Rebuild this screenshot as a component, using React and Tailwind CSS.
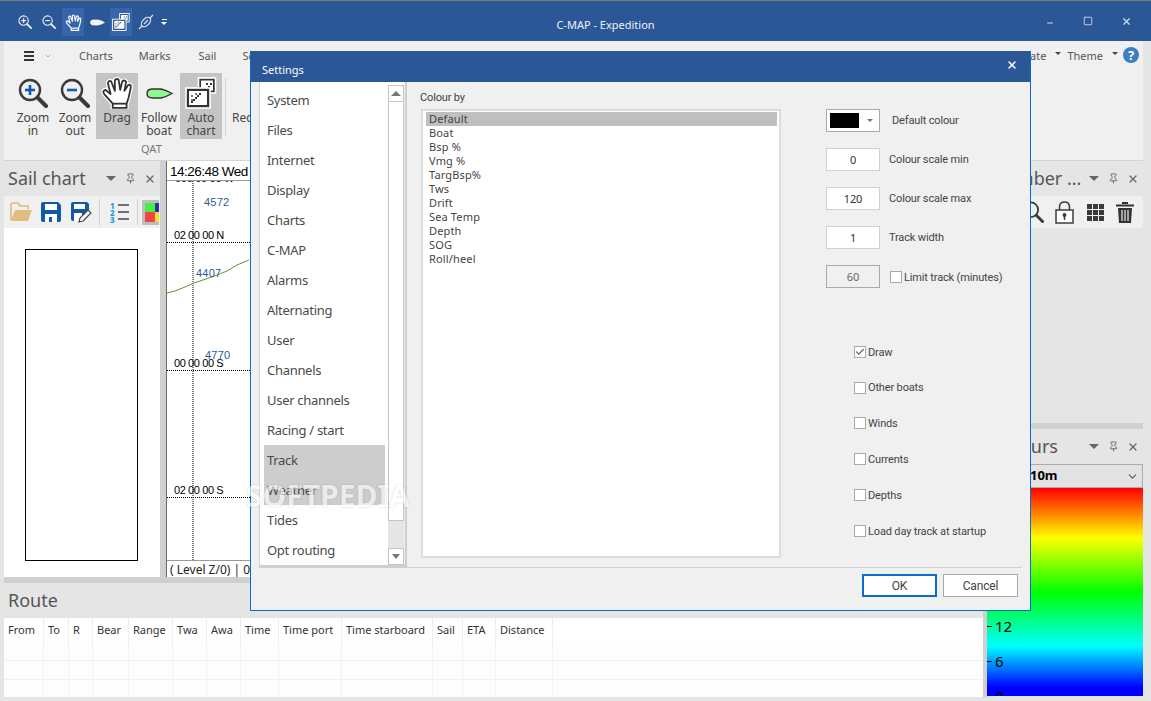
import React from 'react';
import { Minus, Square, X, Check, ChevronDown, Pin } from 'lucide-react';

const Magnifier = ({ mark, size = 30, ring = '#3a3a3a', markColor = '#0b5cad', glass = 'none' }) => (
    <svg width={size} height={size} viewBox="0 0 30 30" fill="none">
        <circle cx="12" cy="12" r="10" fill={glass} stroke={ring} strokeWidth="2.4" />
        <path d="M19.5 19.5 L28 28" stroke={ring} strokeWidth="4" strokeLinecap="round" />
        <path d="M7 12 H17" stroke={markColor} strokeWidth="2.6" />
        {mark === 'plus' && <path d="M12 7 V17" stroke={markColor} strokeWidth="2.6" />}
    </svg>
);

const handPath = 'M11 29 V25 L3 16 Q1 13 4 12 L9 16 L6.5 6 Q7 3 9.5 4 L13 13 L13 3 Q14.5 1 16.5 2.5 L18 12 L20 4 Q22 2.5 23.5 4.5 L22 13 L25.5 7.5 Q28 6.5 28 9.5 L26 19 L24 25 V29Z';

const HandIcon = ({ size = 32, line = '#333', fill = '#fff', halo, width = 1.7 }) => (
    <svg width={size} height={size} viewBox="0 0 30 30" strokeLinejoin="round">
        {halo && <path d={handPath} fill="none" stroke={halo} strokeWidth="4" />}
        <path d={handPath} fill={fill} stroke={line} strokeWidth={width} />
        <path d="M11 25 H24" stroke={line} strokeWidth={width} />
    </svg>
);

const Boat = ({ w = 27, h = 11, fill = '#8dfa8d', stroke = '#333' }) => (
    <svg width={w} height={h} viewBox="0 0 27 11">
        <path d="M1 5.5 C1 2 3 1 7 1 L15 1 Q21 2.5 26 5.5 Q21 8.5 15 10 L7 10 C3 10 1 9 1 5.5Z" fill={fill} stroke={stroke} strokeWidth="1.4" />
    </svg>
);

const AutoChart = ({ size = 32, line = '#333' }) => (
    <svg width={size} height={size} viewBox="0 0 32 32">
        <rect x="13.5" y="1" width="17" height="15" fill={line} stroke="#fff" strokeWidth="1.6" />
        <rect x="16" y="3.5" width="12" height="10" fill="#fff" />
        <path d="M21 6h2v2h-2zM25 6h2v2h-2zM23 9h2v2h-2z" fill={line} />
        <rect x="1" y="11" width="24" height="20" fill={line} stroke="#fff" strokeWidth="1.6" />
        <rect x="4" y="14" width="18" height="14" fill="#fff" />
        <path d="M6 26h2v-2h2v-2h2v-2h2v-2h2v-2h-2v2h-2v2h-2v2H8v2H6z" fill={line} />
        <path d="M6 22h2v2H6zM6 18h2v2H6zM10 16h2v2h-2z" fill="#777" />
    </svg>
);

const Folder = () => (
    <svg width="23" height="20" viewBox="0 0 23 20">
        <path d="M1 18 V3 Q1 1 3 1 H8 L10 4 H18 V7" fill="none" stroke="#e0b97a" strokeWidth="1.6" />
        <path d="M1 19 L5 8 H22 L18 19Z" fill="#e3bd80" />
    </svg>
);

const Save = () => (
    <svg width="22" height="22" viewBox="0 0 22 22">
        <path d="M1 3 Q1 1 3 1 H18 L21 4 V19 Q21 21 19 21 H3 Q1 21 1 19Z" fill="#0f5ba7" />
        <rect x="5" y="3" width="12" height="6" fill="#fff" />
        <rect x="5" y="13" width="12" height="8" fill="#fff" />
        <rect x="9" y="16" width="3" height="5" fill="#0f5ba7" />
    </svg>
);

const SaveEdit = () => (
    <svg width="22" height="22" viewBox="0 0 22 22">
        <path d="M1 3 Q1 1 3 1 H17 L19 3 V12 L11 20 H3 Q1 20 1 18Z" fill="#0f5ba7" />
        <rect x="4" y="3" width="11" height="5" fill="#fff" />
        <rect x="4" y="12" width="8" height="8" fill="#fff" />
        <path d="M9 21 L10 17 L18 9 L21 12 L13 20Z" fill="#fff" stroke="#444" strokeWidth="1.2" />
    </svg>
);

const NumberedList = () => (
    <svg width="20" height="21" viewBox="0 0 20 21">
        <path d="M8 3h11M8 10h11M8 17h11" stroke="#444" strokeWidth="1.6" />
        <text x="0" y="6.5" fontSize="8" fontWeight="800" fill="#1e9be0">1</text>
        <text x="0" y="13.5" fontSize="8" fontWeight="800" fill="#1e9be0">2</text>
        <text x="0" y="20.5" fontSize="8" fontWeight="800" fill="#1e9be0">3</text>
    </svg>
);

const ColourBlock = () => (
    <div className="w-[17px] h-[25px] border-[3px] border-r-0 border-[#bdbdbd] grid grid-cols-[10px_4px] grid-rows-2">
        <div className="bg-[#44f044]" />
        <div className="bg-[#2a2ab8]" />
        <div className="bg-[#f24444]" />
        <div className="bg-[#f0e030]" />
    </div>
);

const Lock = () => (
    <svg width="19" height="23" viewBox="0 0 19 23" fill="none" stroke="#3c3c3c" strokeWidth="1.5">
        <path d="M4.5 9 V6 Q4.5 1 9.5 1 Q14.5 1 14.5 6 V9" />
        <rect x="1" y="9" width="17" height="13" fill="#fff" />
        <circle cx="9.5" cy="14" r="1.2" fill="#3c3c3c" />
        <path d="M9.5 14 V19" />
    </svg>
);

const GridIcon = () => (
    <div className="grid grid-cols-3 gap-[1px] w-[17px] h-[17px]">
        {Array.from({ length: 9 }).map((_, i) => (
            <div key={i} className="bg-[#3a3a3a]" />
        ))}
    </div>
);

const Trash = () => (
    <svg width="20" height="23" viewBox="0 0 20 23">
        <path d="M7 2 H13 M1 4.5 H19" stroke="#333" strokeWidth="2.2" />
        <path d="M3 7 H17 L16 22 H4Z" fill="#333" />
        <path d="M7 9 V20 M10 9 V20 M13 9 V20" stroke="#fff" strokeWidth="1.1" />
    </svg>
);

const RouteIcon = () => (
    <svg width="16" height="16" viewBox="0 0 16 16" fill="none" stroke="#d8e2f0" strokeWidth="1.3">
        <ellipse cx="8" cy="8" rx="3.4" ry="5.6" transform="rotate(45 8 8)" />
        <path d="M1 15 L4 12 M12 4 L15 1" />
        <path d="M6 10 L10 6" />
    </svg>
);

const PanelHead = ({ title, titleClass = 'pl-[4px]' }) => (
    <div className="flex items-center h-[35px] shrink-0">
        <span className={`flex-1 text-[18px] text-[#555] whitespace-nowrap ${titleClass}`}>{title}</span>
        <div className="w-0 h-0 border-x-[5px] border-x-transparent border-t-[5px] border-t-[#666] mr-[9px]" />
        <Pin size={11} color="#666" className="mr-[8px]" />
        <X size={12} color="#666" strokeWidth={2.4} className="mr-[4px]" />
    </div>
);

const RibbonBtn = ({ icon, top, bottom, active }) => (
    <div className={`w-[42px] h-[66px] flex flex-col items-center ${active ? 'bg-[#c4c4c4]' : ''}`}>
        <div className="h-[38px] flex items-center justify-center pt-[2px]">{icon}</div>
        <div className="text-[12px] leading-[13px] text-[#444] text-center">
            <div>{top}</div>
            {bottom && <div>{bottom}</div>}
        </div>
    </div>
);

const sideItems = ['System', 'Files', 'Internet', 'Display', 'Charts', 'C-MAP', 'Alarms', 'Alternating', 'User', 'Channels', 'User channels', 'Racing / start', 'Track', 'Weather', 'Tides', 'Opt routing'];
const colourItems = ['Default', 'Boat', 'Bsp %', 'Vmg %', 'TargBsp%', 'Tws', 'Drift', 'Sea Temp', 'Depth', 'SOG', 'Roll/heel'];
const checks = [
    { label: 'Draw', on: true },
    { label: 'Other boats' },
    { label: 'Winds' },
    { label: 'Currents' },
    { label: 'Depths' },
    { label: 'Load day track at startup' },
];
const columns = ['From', 'To', 'R', 'Bear', 'Range', 'Twa', 'Awa', 'Time', 'Time port', 'Time starboard', 'Sail', 'ETA', 'Distance', ''];
const gridCols = 'grid grid-cols-[40px_25px_24px_36px_44px_34px_34px_38px_63px_91px_30px_33px_57px_1fr]';

const Checkbox = ({ on }) => (
    <div className="w-[12px] h-[12px] border border-[#a9a9a9] bg-white flex items-center justify-center shrink-0">
        {on && <Check size={10} strokeWidth={3} color="#666" />}
    </div>
);

const NumberField = ({ value, label }) => (
    <div className="flex items-center h-[23px] mb-[16px]">
        <div className="w-[54px] h-[23px] border border-[#d0d0d0] bg-white text-center text-[11px] leading-[21px] text-[#333] font-['Noto_Sans',sans-serif]">{value}</div>
        <span className="ml-[9px] pt-[2px]">{label}</span>
    </div>
);

const SettingsDialog = () => (
    <div className="absolute left-[250px] top-[51px] w-[781px] h-[560px] border border-[#0a6ad0] border-t-0 bg-[#f0f0f0] flex flex-col text-[11px] text-[#444] tracking-[-0.15px] font-['Roboto',sans-serif]">
        <div className="h-[31px] shrink-0 bg-[#2b5797] text-white flex items-center justify-between pl-[11px] pr-[12px] pt-[8px] text-[11px] tracking-normal font-['Noto_Sans',sans-serif]">
            <span>Settings</span>
            <X size={12} strokeWidth={3} className="-mt-[12px]" />
        </div>
        <div className="flex h-[485px] shrink-0 pl-[8px] pr-[8px]">
            <div className="w-[148px] h-[485px] flex border-r-2 border-b-2 border-l border-[#cfcfcf] pr-[1px]">
                <div className="w-[129px] bg-white pt-[3px] pl-[4px] relative">
                    {sideItems.map((item, i) => (
                        <div key={item} className={`h-[30px] w-[121px] pl-[3px] pt-[2px] flex items-center text-[13px] text-[#4a4a4a] tracking-[-0.3px] font-['Noto_Sans',sans-serif] ${i === 12 || i === 13 ? 'bg-[#cdcdcd]' : ''}`}>
                            {item}
                        </div>
                    ))}
                    <span className="absolute z-10 left-[-14px] top-[391px] text-[30px] font-bold tracking-normal text-white opacity-60 whitespace-nowrap font-['Noto_Sans',sans-serif] [text-shadow:0_0_2px_rgba(0,0,0,0.3)]">SOFTPEDIA</span>
                </div>
                <div className="w-[16px] bg-white flex flex-col pt-[3px]">
                    <div className="h-[17px] border border-[#c4c4c4] bg-white flex items-center justify-center">
                        <div className="w-0 h-0 border-x-[5px] border-x-transparent border-b-[5px] border-b-[#777]" />
                    </div>
                    <div className="h-[419px] border-x border-b border-[#c4c4c4] bg-white" />
                    <div className="h-[27px] bg-[#e5e5e5]" />
                    <div className="h-[17px] border border-[#c4c4c4] bg-white flex items-center justify-center">
                        <div className="w-0 h-0 border-x-[4px] border-x-transparent border-t-[5px] border-t-[#777]" />
                    </div>
                </div>
            </div>
            <div className="w-[374px] pl-[13px] pt-[9px] shrink-0">
                <div className="h-[18px] leading-[14px]">Colour by</div>
                <div className="w-[360px] h-[449px] ml-[1px] border-2 border-[#dcdcdc] bg-white pl-[3px] pr-[2px] pt-px">
                    {colourItems.map((item, i) => (
                        <div key={item} className={`h-[14px] pl-[3px] leading-[14px] text-[11px] text-[#444] tracking-[0.15px] font-['Noto_Sans',sans-serif] ${i === 0 ? 'bg-[#bfbfbf]' : ''}`}>{item}</div>
                    ))}
                </div>
            </div>
            <div className="flex-1 pt-[27px] pl-[45px]">
                <div className="flex items-center h-[23px] mb-[16px]">
                    <div className="w-[54px] h-[23px] border border-[#a9a9a9] bg-white flex items-center pl-[3px]">
                        <div className="w-[29px] h-[15px] bg-black" />
                        <div className="ml-[8px] w-0 h-0 border-x-[3px] border-x-transparent border-t-[3px] border-t-[#777]" />
                    </div>
                    <span className="ml-[12px] pt-[2px]">Default colour</span>
                </div>
                <NumberField value="0" label="Colour scale min" />
                <NumberField value="120" label="Colour scale max" />
                <NumberField value="1" label="Track width" />
                <div className="flex items-center h-[23px]">
                    <div className="w-[54px] h-[23px] border border-[#a9a9a9] text-center text-[11px] leading-[21px] text-[#666] font-['Noto_Sans',sans-serif]">60</div>
                    <div className="ml-[10px]"><Checkbox /></div>
                    <span className="ml-[2px] pt-[3px]">Limit track (minutes)</span>
                </div>
                <div className="mt-[46px] ml-[28px]">
                    {checks.map((c) => (
                        <div key={c.label} className="h-[35.8px] flex items-center gap-[2px]">
                            <Checkbox on={c.on} />
                            <span className="pt-[2px]">{c.label}</span>
                        </div>
                    ))}
                </div>
            </div>
        </div>
        <div className="mx-[8px] border-t border-[#cfcfcf]" />
        <div className="flex justify-end gap-[6px] pr-[12px] pt-[6px]">
            <button className="w-[75px] h-[23px] border-2 border-[#0a6ad0] bg-white text-[12px] text-[#444]">OK</button>
            <button className="w-[75px] h-[23px] border border-[#a9a9a9] bg-white text-[12px] text-[#444]">Cancel</button>
        </div>
    </div>
);

const ChartCanvas = () => (
    <div className="flex-1 relative bg-white overflow-hidden text-black font-['Liberation_Sans',sans-serif] text-[11px] leading-[13px]">
        <svg className="absolute inset-0 w-full h-full">
            <path d="M26 0 V380" stroke="#000" strokeDasharray="1 1" />
            <path d="M0 61.5 H820 M0 189.5 H820 M0 316.5 H820" stroke="#000" strokeDasharray="1 1" />
            <path d="M0 112 L8 110 L18 106 L27 102 L45 96 L60 90 L70 84 L82 79" fill="none" stroke="#5e9438" strokeWidth="1" />
        </svg>
        <span className="absolute left-[8px] top-[-9px] tracking-[-0.3px] whitespace-nowrap">000 00 00 W</span>
        <span className="absolute left-[37px] top-[15px] tracking-[0.2px] text-[#2b5c90]">4572</span>
        <span className="absolute left-[7px] top-[48px] tracking-[-0.4px] whitespace-nowrap">02 00 00 N</span>
        <span className="absolute left-[29px] top-[86px] tracking-[0.2px] text-[#2b5c90]">4407</span>
        <span className="absolute left-[38px] top-[168px] tracking-[0.2px] text-[#2b5c90]">4770</span>
        <span className="absolute left-[7px] top-[176px] tracking-[-0.4px] whitespace-nowrap">00 00 00 S</span>
        <span className="absolute left-[7px] top-[303px] tracking-[-0.4px] whitespace-nowrap">02 00 00 S</span>
    </div>
);

export default function App() {
    return (
        <div className="relative w-[1151px] h-[701px] overflow-hidden bg-[#e5e5e5] font-['Noto_Sans',sans-serif]">
            {/* title bar */}
            <div className="h-[41px] bg-[#2b5797] border-t border-[#7a7a7a] flex text-white">
                <div className="w-[180px] flex items-center pl-[14px] pt-[2px]">
                    <div className="w-[22px] flex justify-center"><Magnifier mark="plus" size={14} ring="#e8eef6" markColor="#e8eef6" /></div>
                    <div className="w-[26px] flex justify-center"><Magnifier size={14} ring="#e8eef6" markColor="#e8eef6" /></div>
                    <div className="w-[22px] h-[28px] bg-[#3566ab] flex items-center justify-center"><HandIcon size={17} line="#fff" fill="none" width={2} /></div>
                    <div className="w-[26px] flex justify-center"><Boat w={15} h={7} fill="#f4f6fa" stroke="#f4f6fa" /></div>
                    <div className="w-[22px] h-[28px] bg-[#3566ab] flex items-center justify-center"><AutoChart size={18} line="#2b5797" /></div>
                    <div className="w-[28px] flex justify-center"><RouteIcon /></div>
                    <div className="w-[8px] flex flex-col items-center gap-[2px]">
                        <div className="w-[5px] h-[1px] bg-white" />
                        <div className="w-0 h-0 border-x-[3px] border-x-transparent border-t-[3px] border-t-white" />
                    </div>
                </div>
                <div className="flex-1 flex items-center justify-center text-[11px] pt-[8px] text-[#eef2f8]">C-MAP - Expedition</div>
                <div className="w-[120px] pr-[6px] flex items-center text-[#d5deec]">
                    <div className="w-[38px] flex justify-center pt-[3px]"><Minus size={8} strokeWidth={3} /></div>
                    <div className="w-[38px] flex justify-center"><Square size={10} strokeWidth={2} /></div>
                    <div className="w-[38px] flex justify-center"><X size={11} strokeWidth={2.5} /></div>
                </div>
            </div>

            <div className="pl-[4px] pr-[8px]">
                {/* ribbon */}
                <div className="h-[120px] bg-[#f0f0f0] border-b border-[#d4d4d4] relative">
                    <div className="h-[32px] flex items-center text-[11px] text-[#555] pb-[2px]">
                        <div className="w-[20px] ml-[20px] flex flex-col gap-[2px]">
                            <div className="w-[10px] h-[2px] bg-[#333]" />
                            <div className="w-[10px] h-[2px] bg-[#333]" />
                            <div className="w-[10px] h-[2px] bg-[#333]" />
                        </div>
                        <ChevronDown size={8} color="#888" />
                        <span className="ml-[27px]">Charts</span>
                        <span className="ml-[26px]">Marks</span>
                        <span className="ml-[28px]">Sail</span>
                        <span className="ml-[26px]">Settings</span>
                        <div className="flex-1" />
                        <span>ate</span>
                        <div className="ml-[9px] mr-[6px] w-0 h-0 border-x-[3px] border-x-transparent border-t-[3px] border-t-[#444] -mt-[6px]" />
                        <span>Theme</span>
                        <div className="ml-[9px] w-0 h-0 border-x-[3px] border-x-transparent border-t-[3px] border-t-[#444] -mt-[6px]" />
                        <div className="ml-[5px] mr-[4px] w-[16px] h-[16px] rounded-full bg-[#3c7fc0] text-white text-[13px] font-bold leading-[16px] text-center -mt-[3px]">?</div>
                    </div>
                    <div className="flex pl-[8px]">
                        <RibbonBtn icon={<Magnifier mark="plus" />} top="Zoom" bottom="in" />
                        <RibbonBtn icon={<Magnifier />} top="Zoom" bottom="out" />
                        <RibbonBtn icon={<HandIcon halo="#fff" />} top="Drag" active />
                        <RibbonBtn icon={<Boat />} top="Follow" bottom="boat" />
                        <RibbonBtn icon={<AutoChart />} top="Auto" bottom="chart" active />
                        <div className="ml-[3px] w-px h-[58px] bg-[#d4d4d4] mt-[5px]" />
                        <div className="ml-[6px] mt-[38px] text-[12px] leading-[13px] text-[#444]">Record</div>
                    </div>
                    <div className="text-[11px] text-[#777] pl-[137px] leading-[20px]">QAT</div>
                </div>

                {/* docked panels */}
                <div className="flex h-[536px]">
                    <div className="w-[979px] flex flex-col shrink-0">
                        <div className="h-[416px] flex shrink-0">
                            <div className="w-[156px] flex flex-col shrink-0">
                                <PanelHead title="Sail chart" />
                                <div className="h-[32px] bg-[#f0f0f0] flex items-center pl-[6px] overflow-hidden">
                                    <Folder />
                                    <div className="ml-[7px]"><Save /></div>
                                    <div className="ml-[8px]"><SaveEdit /></div>
                                    <div className="ml-[7px] w-px h-[26px] bg-[#cfcfcf]" />
                                    <div className="ml-[10px]"><NumberedList /></div>
                                    <div className="ml-[7px] w-px h-[26px] bg-[#cfcfcf]" />
                                    <div className="ml-[4px]"><ColourBlock /></div>
                                </div>
                                <div className="flex-1 bg-white pl-[21px] pr-[22px] pt-[21px] pb-[16px]">
                                    <div className="h-full border border-black" />
                                </div>
                            </div>
                            <div className="w-[7px] bg-[#d0d0d0] border-r border-[#6a6a6a] shrink-0" />
                            <div className="flex-1 flex flex-col bg-white">
                                <div className="h-[19px] border-b border-[#9a9a9a] pl-[3px] text-[13.5px] tracking-[-0.5px] leading-[20px] text-black font-['Liberation_Sans',sans-serif] mt-[1px]">14:26:48 Wed</div>
                                <ChartCanvas />
                                <div className="h-[17px] border-t border-[#9a9a9a] pl-[3px] text-[12px] leading-[17px] text-[#222] bg-white">( Level Z/0) | 0</div>
                            </div>
                        </div>
                        <div className="h-[6px] bg-[#cfcfcf] shrink-0" />
                        <div className="h-[114px] shrink-0 flex flex-col">
                            <div className="h-[35px] shrink-0 text-[18px] leading-[35px] text-[#555] pl-[4px]">Route</div>
                            <div className="flex-1 bg-white overflow-hidden">
                                <div className={`${gridCols} h-[24px] text-[11px] text-[#333]`}>
                                    {columns.map((c, i) => (
                                        <div key={i} className="pl-[4px] leading-[24px] border-r border-[#efefef] whitespace-nowrap last:border-r-0">{c}</div>
                                    ))}
                                </div>
                                {[0, 1, 2].map((r) => (
                                    <div key={r} className={`${gridCols} h-[19px] border-b border-[#efefef] bg-[#fdfdfd]`}>
                                        {columns.map((c, i) => (
                                            <div key={i} className="border-r border-[#f2f2f2] last:border-r-0" />
                                        ))}
                                    </div>
                                ))}
                            </div>
                        </div>
                    </div>

                    <div className="w-[4px] bg-[#d0d0d0] shrink-0" />

                    <div className="flex-1 flex flex-col">
                        <PanelHead title="Number ..." titleClass="pl-[5px]" />
                        <div className="h-[32px] bg-[#f0f0f0] flex items-center justify-end pr-[8px]">
                            <Magnifier size={22} mark="none" markColor="transparent" />
                            <div className="ml-[11px]"><Lock /></div>
                            <div className="ml-[13px]"><GridIcon /></div>
                            <div className="ml-[11px]"><Trash /></div>
                        </div>
                        <div className="h-[195px]" />
                        <div className="h-[6px] bg-[#d0d0d0]" />
                        <PanelHead title="Colours" titleClass="pl-[6px]" />
                        <div className="h-[24px] border border-[#ababab] bg-[#e3e3e3] flex items-center justify-between pl-[42px] pr-[3px] text-[13px] font-bold text-black">
                            <span>10m</span>
                            <ChevronDown size={13} color="#555" />
                        </div>
                        <div className="h-[208px] relative bg-[linear-gradient(to_bottom,#ff0000_0%,#ffff00_24%,#00ff00_50%,#00ffff_76%,#0000ff_96%,#0000ff_100%)] overflow-hidden">
                            <div className="absolute left-0 top-[130px] flex items-center gap-[3px] text-[15px] leading-[16px] text-black"><div className="w-[5px] h-px bg-black" />12</div>
                            <div className="absolute left-0 top-[165px] flex items-center gap-[3px] text-[15px] leading-[16px] text-black"><div className="w-[5px] h-px bg-black" />6</div>
                            <div className="absolute left-0 top-[200px] flex items-center gap-[3px] text-[15px] leading-[16px] text-black"><div className="w-[5px] h-px bg-black" />0</div>
                        </div>
                    </div>
                </div>
            </div>

            <SettingsDialog />
        </div>
    );
}
